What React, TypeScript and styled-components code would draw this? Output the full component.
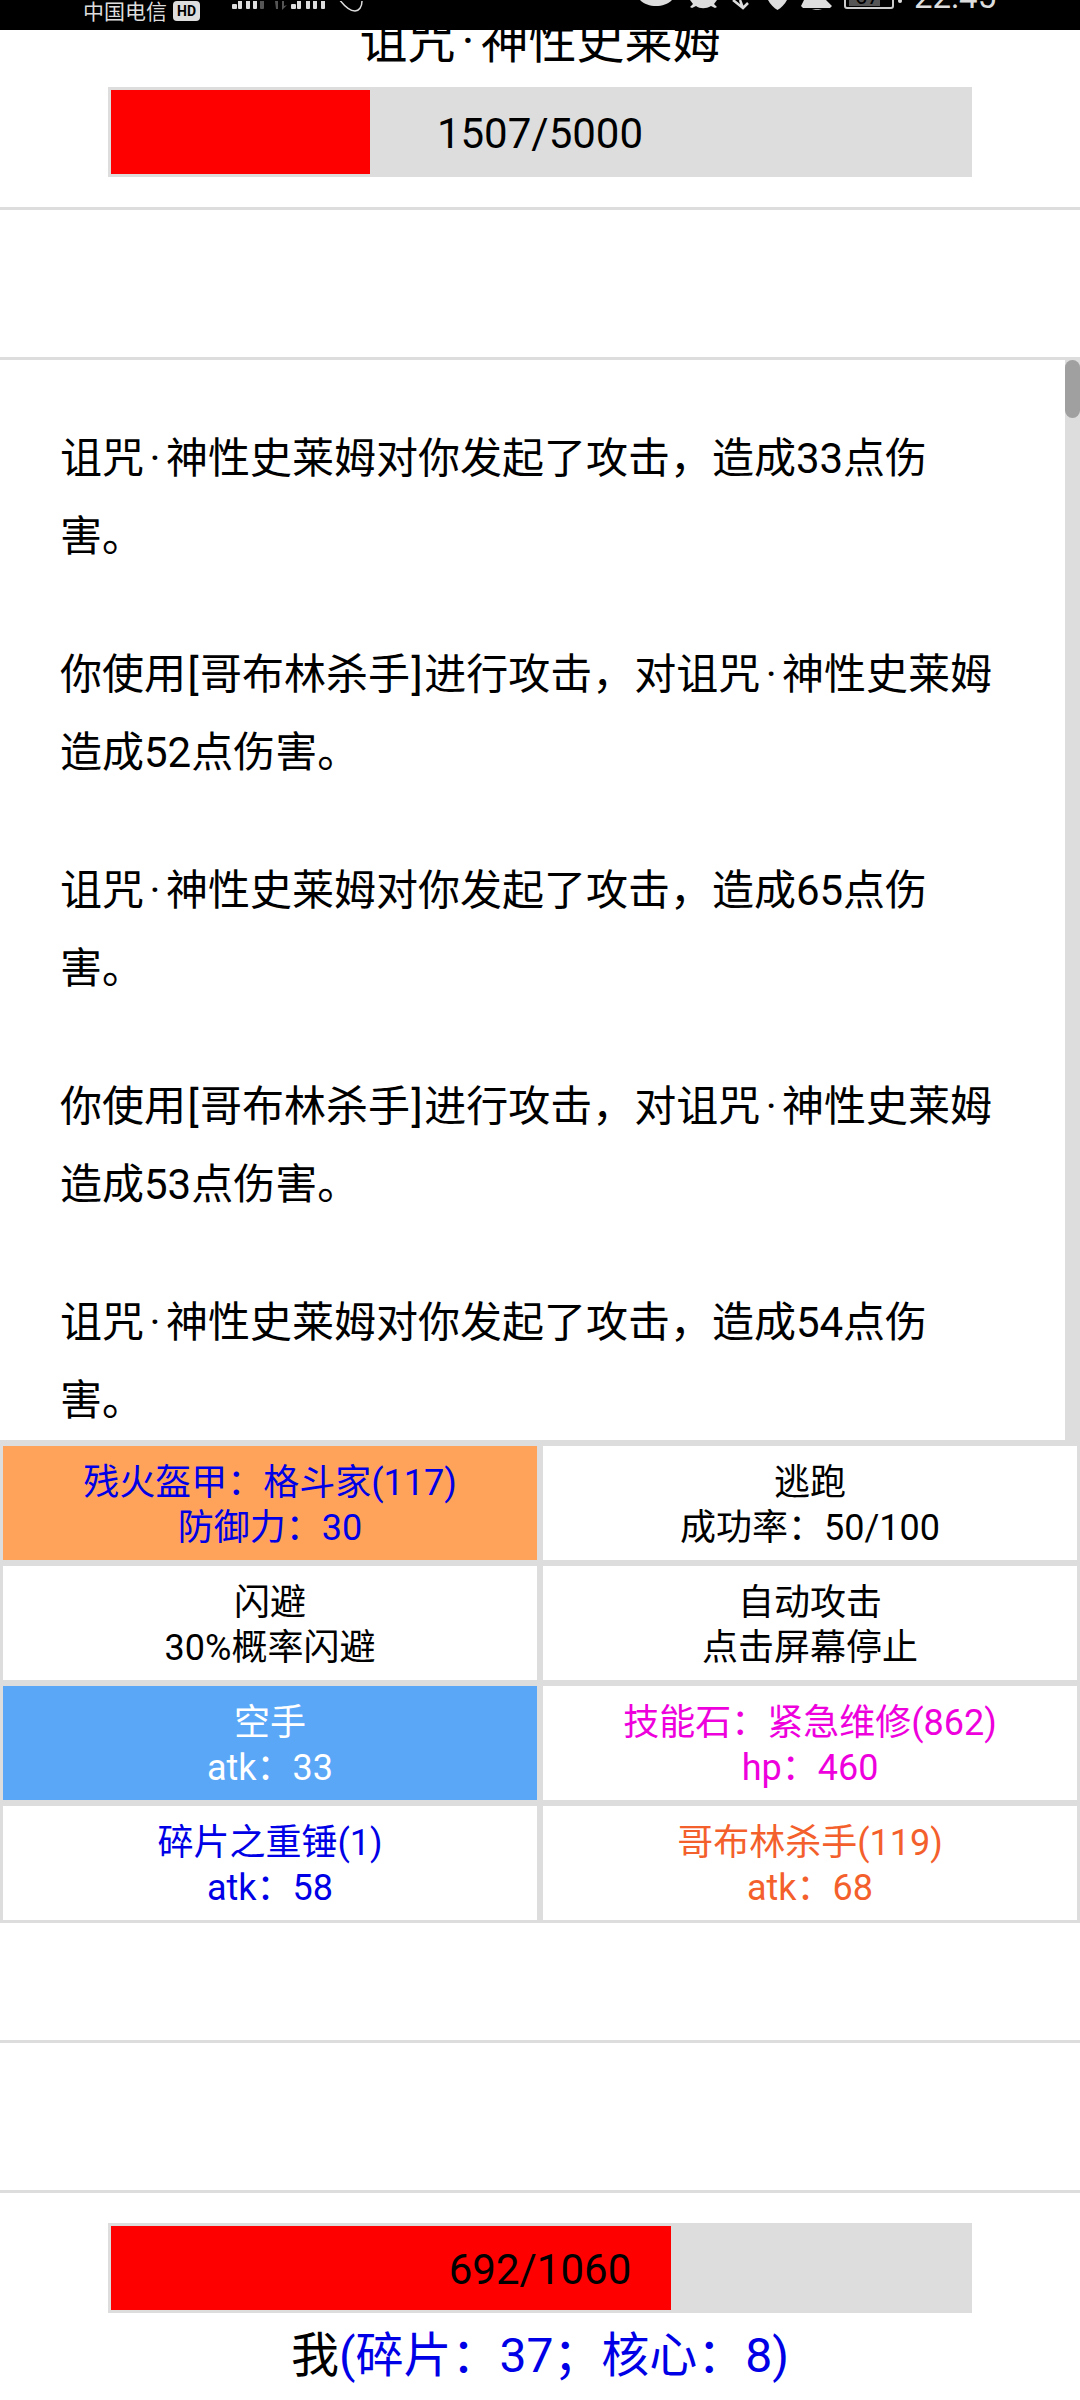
import React from "react";
import styled, { createGlobalStyle } from "styled-components";

const GlobalStyle = createGlobalStyle`
  html, body {
    margin: 0;
    padding: 0;
    background: #fff;
  }
  * {
    box-sizing: border-box;
  }
`;

const Page = styled.div`
  width: 1080px;
  height: 2400px;
  display: flex;
  flex-direction: column;
  overflow: hidden;
  background: #fff;
  color: #000;
  font-family: Roboto, "Noto Sans CJK SC", sans-serif;
`;

const StatusBar = styled.div`
  height: 30px;
  flex: none;
  display: flex;
  align-items: flex-start;
  justify-content: space-between;
  background: #000;
  color: #ddd;
  overflow: hidden;
  padding: 0 83px;
`;

const StatusLeft = styled.div`
  display: flex;
  align-items: flex-start;
  padding-top: 1px;
`;

const StatusRight = styled.div`
  height: 9px;
  display: flex;
  align-items: flex-end;
`;

const Carrier = styled.span`
  font-size: 21px;
  line-height: 22px;
`;

const HdBadge = styled.span`
  width: 27px;
  height: 20px;
  margin-left: 6px;
  border-radius: 4px;
  background: #ddd;
  color: #000;
  font-size: 14px;
  font-weight: 700;
  line-height: 20px;
  text-align: center;
`;

const SignalIcon = styled.svg`
  width: 136px;
  height: 11px;
  margin-left: 32px;
  flex: none;
  display: block;
`;

const TrayIcon = styled.svg`
  width: 265px;
  height: 10px;
  flex: none;
  display: block;
  margin-bottom: -1px;
`;

const Clock = styled.span`
  margin: 0 3px 0 9px;
  width: 80px;
  font-size: 33px;
  line-height: 24px;
  height: 24px;
  flex: none;
`;

const EnemyTitle = styled.div`
  height: 57px;
  flex: none;
  display: flex;
  align-items: flex-end;
  justify-content: center;
  overflow: hidden;
  font-size: 48px;
  line-height: 66px;
  padding-bottom: 12px;
`;

const Dot = styled.span`
  margin: 0 0.13em;
`;

const Bracket = styled.span`
  margin: 0 0.035em;
`;

const Bar = styled.div<{ $top?: number }>`
  position: relative;
  width: 864px;
  height: 90px;
  flex: none;
  margin: ${(p) => p.$top || 0}px auto 0;
  border: 3px solid #ddd;
  background: #ddd;
`;

const BarFill = styled.div`
  height: 100%;
  background: #f00;
`;

const BarLabel = styled.div`
  position: absolute;
  inset: 0;
  display: flex;
  align-items: center;
  justify-content: center;
  font-size: 42px;
  padding-top: 2px;
`;

const Divider = styled.div<{ $top: number }>`
  height: 3px;
  flex: none;
  margin-top: ${(p) => p.$top}px;
  background: #ddd;
`;

const LogPanel = styled.div`
  position: relative;
  height: 1080px;
  flex: none;
  overflow: hidden;
  padding: 0 75px 0 60px;
  font-size: 42px;
  line-height: 78px;
`;

const LogEntry = styled.p`
  margin: 60px 0;
  &:first-child {
    margin-top: 60px;
  }
`;

const ScrollTrack = styled.div`
  position: absolute;
  top: 0;
  right: 0;
  bottom: 0;
  width: 15px;
  background: #ddd;
`;

const ScrollThumb = styled.div`
  height: 58px;
  border-radius: 8px;
  background: #a0a0a0;
`;

const ActionGrid = styled.div`
  display: grid;
  grid-template-columns: 1fr 1fr;
  flex: none;
`;

const ActionCell = styled.div<{ $bg?: string; $color?: string }>`
  height: 120px;
  display: flex;
  flex-direction: column;
  align-items: center;
  justify-content: center;
  border: 3px solid #ddd;
  background: ${(p) => p.$bg || "#fff"};
  color: ${(p) => p.$color || "#000"};
  font-size: 36px;
  line-height: 45px;
  padding-top: 5px;
`;

const PlayerName = styled.div`
  margin-top: 15px;
  text-align: center;
  font-size: 48px;
  line-height: 56px;
`;

const Stats = styled.span`
  color: #0000e6;
`;

const log = [
  "诅咒·神性史莱姆对你发起了攻击，造成33点伤害。",
  "你使用[哥布林杀手]进行攻击，对诅咒·神性史莱姆造成52点伤害。",
  "诅咒·神性史莱姆对你发起了攻击，造成65点伤害。",
  "你使用[哥布林杀手]进行攻击，对诅咒·神性史莱姆造成53点伤害。",
  "诅咒·神性史莱姆对你发起了攻击，造成54点伤害。",
];

const actions = [
  { top: "残火盔甲：格斗家(117)", bottom: "防御力：30", bg: "#ffa25a", color: "#0000e6" },
  { top: "逃跑", bottom: "成功率：50/100" },
  { top: "闪避", bottom: "30%概率闪避" },
  { top: "自动攻击", bottom: "点击屏幕停止" },
  { top: "空手", bottom: "atk：33", bg: "#5aa7f8", color: "#fff" },
  { top: "技能石：紧急维修(862)", bottom: "hp：460", color: "#ee00dd" },
  { top: "碎片之重锤(1)", bottom: "atk：58", color: "#0000e6" },
  { top: "哥布林杀手(119)", bottom: "atk：68", color: "#f4602c" },
];

// the middle dot and brackets are wider in the reference font than in Roboto
const spaced = (text: string) =>
  text.split(/([·\[\]])/).map((part, i) => {
    if (part === "·") return <Dot key={i}>·</Dot>;
    if (part === "[" || part === "]") return <Bracket key={i}>{part}</Bracket>;
    return part;
  });

// signal bars and wifi arc, only their lower ends show under the top edge
const Signal = () => (
  <SignalIcon viewBox="0 0 136 11">
    <g fill="#ddd">
      <rect x="0" y="3" width="5" height="5" rx="1" />
      <rect x="6" y="-4" width="4" height="12" rx="1" />
      <rect x="14" y="-4" width="4" height="12" rx="1" />
      <rect x="21" y="-4" width="4" height="12" rx="1" />
      <rect x="59" y="3" width="5" height="5" rx="1" />
      <rect x="65" y="-4" width="4" height="12" rx="1" />
      <rect x="74" y="-4" width="4" height="12" rx="1" />
      <rect x="81" y="-4" width="4" height="12" rx="1" />
      <rect x="89" y="-4" width="4" height="12" rx="1" />
    </g>
    <rect x="28" y="-4" width="4" height="12" rx="1" fill="#555" />
    <path d="M43 0h3v8h-2zM50 0h2v5l3-1-5 5z" fill="#555" />
    <path d="M107 -2C113 6 119 10 123 10C127 10 130 6 130 0" fill="none" stroke="#ddd" strokeWidth="1.5" />
  </SignalIcon>
);

// tray icons from x 640 to 905, cut off by the top edge the same way
const Tray = () => (
  <TrayIcon viewBox="0 0 265 10">
    <g fill="#ddd">
      <path d="M0 0H32C28 4 22 6 16 6C10 6 4 4 0 0Z" />
      <path d="M50 0H77L74 4L77 7L75 8L71 6C66 9 60 9 56 6L52 8L50 7L53 4Z" />
      <path d="M128 0H147C145 4 141 8 137.500 10C134 8 130 4 128 0Z" />
      <path d="M164 0H186L192 6L190 8H163L161 6ZM172 9H182C180 10 174 10 172 9Z" />
      <circle cx="260" cy="1" r="2" />
    </g>
    <path d="M93 0L103 8L108 3M100 0L103 8" fill="none" stroke="#ddd" strokeWidth="2.500" />
    <path d="M205 0V6Q205 8 207 8H251Q253 8 253 6V0" fill="none" stroke="#ccc" strokeWidth="2" />
    <rect x="209" y="0" width="31" height="6" fill="#555" />
    <text x="215" y="4" fontSize="22" fontFamily="Roboto" fill="#000">67</text>
  </TrayIcon>
);

const App = () => {
  return (
    <Page>
      <GlobalStyle />
      <StatusBar>
        <StatusLeft>
          <Carrier>中国电信</Carrier>
          <HdBadge>HD</HdBadge>
          <Signal />
        </StatusLeft>
        <StatusRight>
          <Tray />
          <Clock>22:45</Clock>
        </StatusRight>
      </StatusBar>
      <EnemyTitle>
        <span>{spaced("诅咒·神性史莱姆")}</span>
      </EnemyTitle>
      <Bar>
        <BarFill style={{ width: `${(1507 / 5000) * 100}%` }} />
        <BarLabel>1507/5000</BarLabel>
      </Bar>
      <Divider $top={30} />
      <Divider $top={147} />
      <LogPanel>
        {log.map((line, i) => (
          <LogEntry key={i}>{spaced(line)}</LogEntry>
        ))}
        <ScrollTrack>
          <ScrollThumb />
        </ScrollTrack>
      </LogPanel>
      <Divider $top={0} />
      <ActionGrid>
        {actions.map((a) => (
          <ActionCell key={a.top} $bg={a.bg} $color={a.color}>
            <div>{a.top}</div>
            <div>{a.bottom}</div>
          </ActionCell>
        ))}
      </ActionGrid>
      <Divider $top={117} />
      <Divider $top={147} />
      <Bar $top={30}>
        <BarFill style={{ width: `${(692 / 1060) * 100}%` }} />
        <BarLabel>692/1060</BarLabel>
      </Bar>
      <PlayerName>
        我<Stats>(碎片：37；核心：8)</Stats>
      </PlayerName>
    </Page>
  );
};

export default App;
